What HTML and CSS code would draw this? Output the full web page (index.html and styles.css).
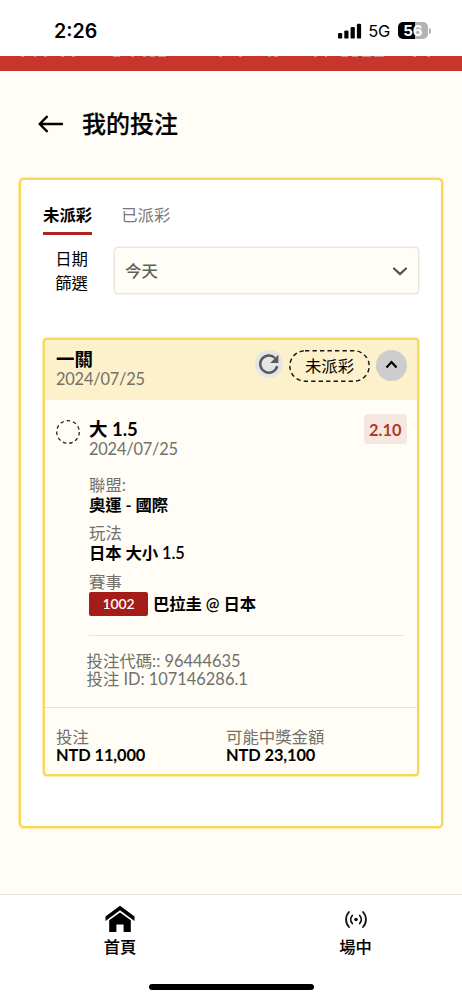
FILE: index.html
```html
<!DOCTYPE html>
<html lang="zh-Hant">
<head>
<meta charset="utf-8">
<meta name="viewport" content="width=device-width, initial-scale=1">
<title>我的投注</title>
<link rel="stylesheet" href="styles.css">
</head>
<body>
<div class="screen">
  <div class="status">
    <span class="clock">2:26</span>
    <div class="signals">
      <svg class="bars" width="24" height="16" viewBox="0 0 24 16"><rect x="0" y="10" width="4.2" height="5.6" rx="1.2"/><rect x="6.3" y="7.4" width="4.2" height="8.2" rx="1.2"/><rect x="12.6" y="4" width="4.2" height="11.6" rx="1.2"/><rect x="18.9" y="0.8" width="4.2" height="14.8" rx="1.2"/></svg>
      <span class="network">5G</span>
      <span class="battery">56</span>
      <span class="battery-tip"></span>
    </div>
  </div>
  <svg class="ribbon" width="462" height="15" viewBox="0 0 462 15"><rect width="462" height="15" fill="#c8352c"/><path d="M21 0h3M34 0h2M44 0h3M61 0h3M72 0h3M113 0h7M131 0h3M143 0h3M150 0h5M158 0h8M219 0h3M239 0h3M268 0h3M274 0h4M314 0h3M325 0h2M341 0h7M352 0h6M362 0h9M374 0h10M413 0h3M427 0h3" stroke="#fff" stroke-opacity=".8"/></svg>

  <header class="heading">
    <svg width="26" height="18" viewBox="0 0 26 18" fill="none" stroke="#000" stroke-width="2.4" stroke-linecap="round" stroke-linejoin="round"><path d="M24 9H2M8.8 1.8 1.6 9l7.2 7.2"/></svg>
    <h1>我的投注</h1>
  </header>

  <main class="panel">
    <nav class="tabs"><span class="tab tab-on">未派彩</span><span class="tab">已派彩</span></nav>
    <div class="filter">
      <label class="filter-label">日期<br>篩選</label>
      <div class="select"><span>今天</span><svg width="16" height="10" viewBox="0 0 16 10" fill="none" stroke="#555550" stroke-width="2.3" stroke-linecap="round" stroke-linejoin="round"><path d="m2 2.500 6 5.600 6-5.600"/></svg></div>
    </div>

    <section class="ticket">
      <div class="ticket-head">
        <div>
          <div class="big">一關</div>
          <div class="muted date">2024/07/25</div>
        </div>
        <div class="actions">
          <svg class="refresh" width="28" height="28" viewBox="0 0 28 28"><circle cx="14" cy="14" r="14" fill="#e5e5e5"/><path d="M22.200 16.100A8.600 8.600 0 1 1 20 8" fill="none" stroke="#5a5a5e" stroke-width="2.500"/><path d="M23.400 4.800v8.200h-8.200z" fill="#5a5a5e"/></svg>
          <span class="pill"><svg width="81" height="32" viewBox="0 0 81 32"><rect x=".8" y=".8" width="79.4" height="30.4" rx="15.2" fill="none" stroke="#111" stroke-width="1.4" stroke-dasharray="4.3 3.2"/></svg><span>未派彩</span></span>
          <svg class="collapse" width="31" height="31" viewBox="0 0 31 31"><circle cx="15.5" cy="15.5" r="15.5" fill="#cdcdcd"/><path d="m10.500 17.500 5-5.400 5 5.400" fill="none" stroke="#000" stroke-width="2.200"/></svg>
        </div>
      </div>

      <div class="bet">
        <svg class="state" width="24" height="24" viewBox="0 0 24 24"><circle cx="12" cy="12" r="11.3" fill="none" stroke="#222" stroke-width="1.3" stroke-dasharray="3.5 2.95"/></svg>
        <div class="bet-main">
          <div class="bet-top">
            <div>
              <div class="big">大 1.5</div>
              <div class="muted date">2024/07/25</div>
            </div>
            <span class="odds">2.10</span>
          </div>
          <dl class="facts">
            <dt>聯盟:</dt><dd>奧運 - 國際</dd>
            <dt>玩法</dt><dd>日本 大小 1.5</dd>
            <dt>賽事</dt><dd class="match"><span class="code">1002</span><span>巴拉圭 @ 日本</span></dd>
          </dl>
          <div class="ids"><div>投注代碼:: 96444635</div><div>投注 ID: 107146286.1</div></div>
        </div>
      </div>

      <div class="totals">
        <div><div class="muted">投注</div><div class="amount">NTD 11,000</div></div>
        <div><div class="muted">可能中獎金額</div><div class="amount">NTD 23,100</div></div>
      </div>
    </section>
  </main>

  <footer class="bottom">
    <div class="items">
      <div class="item"><svg width="30" height="28" viewBox="0 0 30 28"><path d="M15 .8 29.5 11.500v4.400L15 5.300.5 15.900v-4.400z"/><path d="M15 7.600 25.800 15.300V27h-7.200v-7.400h-7.200V27H4.200V15.300z"/></svg><span>首頁</span></div>
      <div class="item"><svg width="24" height="28" viewBox="0 0 24 28" fill="none" stroke="#111" stroke-width="1.8" stroke-linecap="round"><circle cx="12" cy="14.5" r="1.8" fill="#111" stroke="none"/><path d="M8.3 10.500a6 6 0 0 0 0 8M15.700 10.500a6 6 0 0 1 0 8M5 7a11 11 0 0 0 0 15M19 7a11 11 0 0 1 0 15"/></svg><span>場中</span></div>
    </div>
    <div class="home-bar"></div>
  </footer>
</div>
</body>
</html>
```
FILE: styles.css
```css
* { box-sizing: border-box; }
body { margin: 0; background: #fffdf5; }
.screen {
  width: 462px; height: 1000px; overflow: hidden;
  display: flex; flex-direction: column;
  font: 16.4px/18px Lato, "Noto Sans CJK TC", sans-serif;
  color: #000; background: #fffdf5;
}
.status {
  height: 55.5px; flex: none; background: #fff;
  display: flex; justify-content: space-between;
  padding: 19px 31px 0 54px;
  font-family: Inter, sans-serif;
}
.clock { font-size: 19.6px; line-height: 24px; font-weight: 600; }
.signals { display: flex; align-items: flex-start; }
.bars { margin: 3.5px 6px 0 0; }
.network { width: 29.5px; font-size: 16.5px; line-height: 24px; letter-spacing: -.2px; }
.battery {
  width: 30.5px; height: 17px; margin-top: 3px; border-radius: 5px;
  background: linear-gradient(90deg, #000 56%, #b3b3b3 56%);
  color: #fff; text-align: center; font-size: 15px; line-height: 17px; font-weight: 700;
}
.battery-tip { width: 1.8px; height: 6px; margin: 8.5px 0 0 1px; border-radius: 0 2px 2px 0; background: #b3b3b3; }
.ribbon { flex: none; display: block; }

.heading { flex: none; display: flex; align-items: center; gap: 18px; height: 107px; padding-left: 38px; }
h1 { margin: 0; font-size: 24px; line-height: 30px; font-weight: 500; -webkit-text-stroke: .2px #000; }

.panel {
  flex: none; width: 424px; height: 650px; margin-left: 19px; padding: 24px 22px 0 22px;
  border: 2px solid #f9d857; box-shadow: 0 0 0 .5px #f9d857; border-radius: 5px; background: #fff;
}
.tabs { display: flex; gap: 29px; height: 31px; }
.tab { color: #777; padding-top: 2px; }
.tab-on { color: #000; font-weight: 700; border-bottom: 3px solid #b0241f; }
.filter { display: flex; justify-content: space-between; margin-top: 12.5px; height: 47.5px; }
.filter-label { width: 45px; line-height: 24px; text-align: right; }
.select {
  width: 305px; height: 47px; padding: 0 10px;
  display: flex; align-items: center; justify-content: space-between;
  border: 1px solid #ebe6e0; box-shadow: 0 0 0 .5px #ebe6e0; border-radius: 4px; background: #fffdf5;
  color: #60605c; font-weight: 500;
}

.ticket {
  width: 376px; height: 438px; margin-top: 43px;
  border: 2px solid #f9d857; box-shadow: 0 0 0 .5px #f9d857; border-radius: 4px; background: #fffdf5;
  display: flex; flex-direction: column; overflow: hidden;
}
.ticket-head {
  height: 60px; flex: none; padding: 9px 10px 0 11px; background: #fdf1cb;
  display: flex; justify-content: space-between;
}
.big { font-size: 18.5px; line-height: 20px; font-weight: 700; }
.muted { color: #70706c; }
.date { line-height: 19px; letter-spacing: -.2px; }
.actions { display: flex; align-items: flex-start; padding-top: 1px; }
.refresh { margin-right: 6px; }
.pill { display: grid; margin-right: 6px; }
.pill > * { grid-area: 1 / 1; }
.pill span { text-align: center; line-height: 32px; }

.bet { display: flex; height: 308px; flex: none; padding: 19px 12.5px 0 10.5px; border-bottom: 1px solid #e8e3dd; }
.state { flex: none; margin: 1px 9.5px 0 0; }
.bet-main { flex: 1; }
.bet-top { display: flex; justify-content: space-between; height: 38px; }
.odds {
  width: 42.5px; height: 30px; margin: -5px -2px 0 0; border-radius: 4px;
  background: #f6e8e1; color: #b03a2c; text-align: center; line-height: 31px; font-weight: 700;
}
.facts { margin: 18px 0 0; height: 161px; width: 315px; border-bottom: 1px solid #e8e3dd; }
.facts dt { color: #70706c; line-height: 20px; }
.facts dd { margin: 0 0 8.5px; line-height: 20px; font-weight: 600; letter-spacing: -.1px; }
.facts .match { display: flex; align-items: center; gap: 5px; height: 24px; }
.code {
  width: 59px; height: 24px; border-radius: 2px; background: #a41d18; color: #fff;
  text-align: center; font-size: 14px; line-height: 24px;
}
.ids { margin: 16px 0 0 -2.5px; color: #70706c; }

.totals { display: flex; padding: 20px 0 0 11px; }
.totals > div { width: 170px; }
.amount { font-weight: 700; letter-spacing: -.1px; }

.bottom { margin-top: auto; flex: none; height: 106px; border-top: 1px solid #e6e4df; background: #fff; }
.items { display: flex; justify-content: space-between; padding: 10px 88px 0 101.5px; height: 89px; }
.item { width: 37px; display: flex; flex-direction: column; align-items: center; font-weight: 500; -webkit-text-stroke: .1px #000; }
.item span { margin-top: 5px; font-size: 16.3px; white-space: nowrap; }
.home-bar { width: 165px; height: 6px; margin: 0 auto; border-radius: 3px; background: #000; }
```
